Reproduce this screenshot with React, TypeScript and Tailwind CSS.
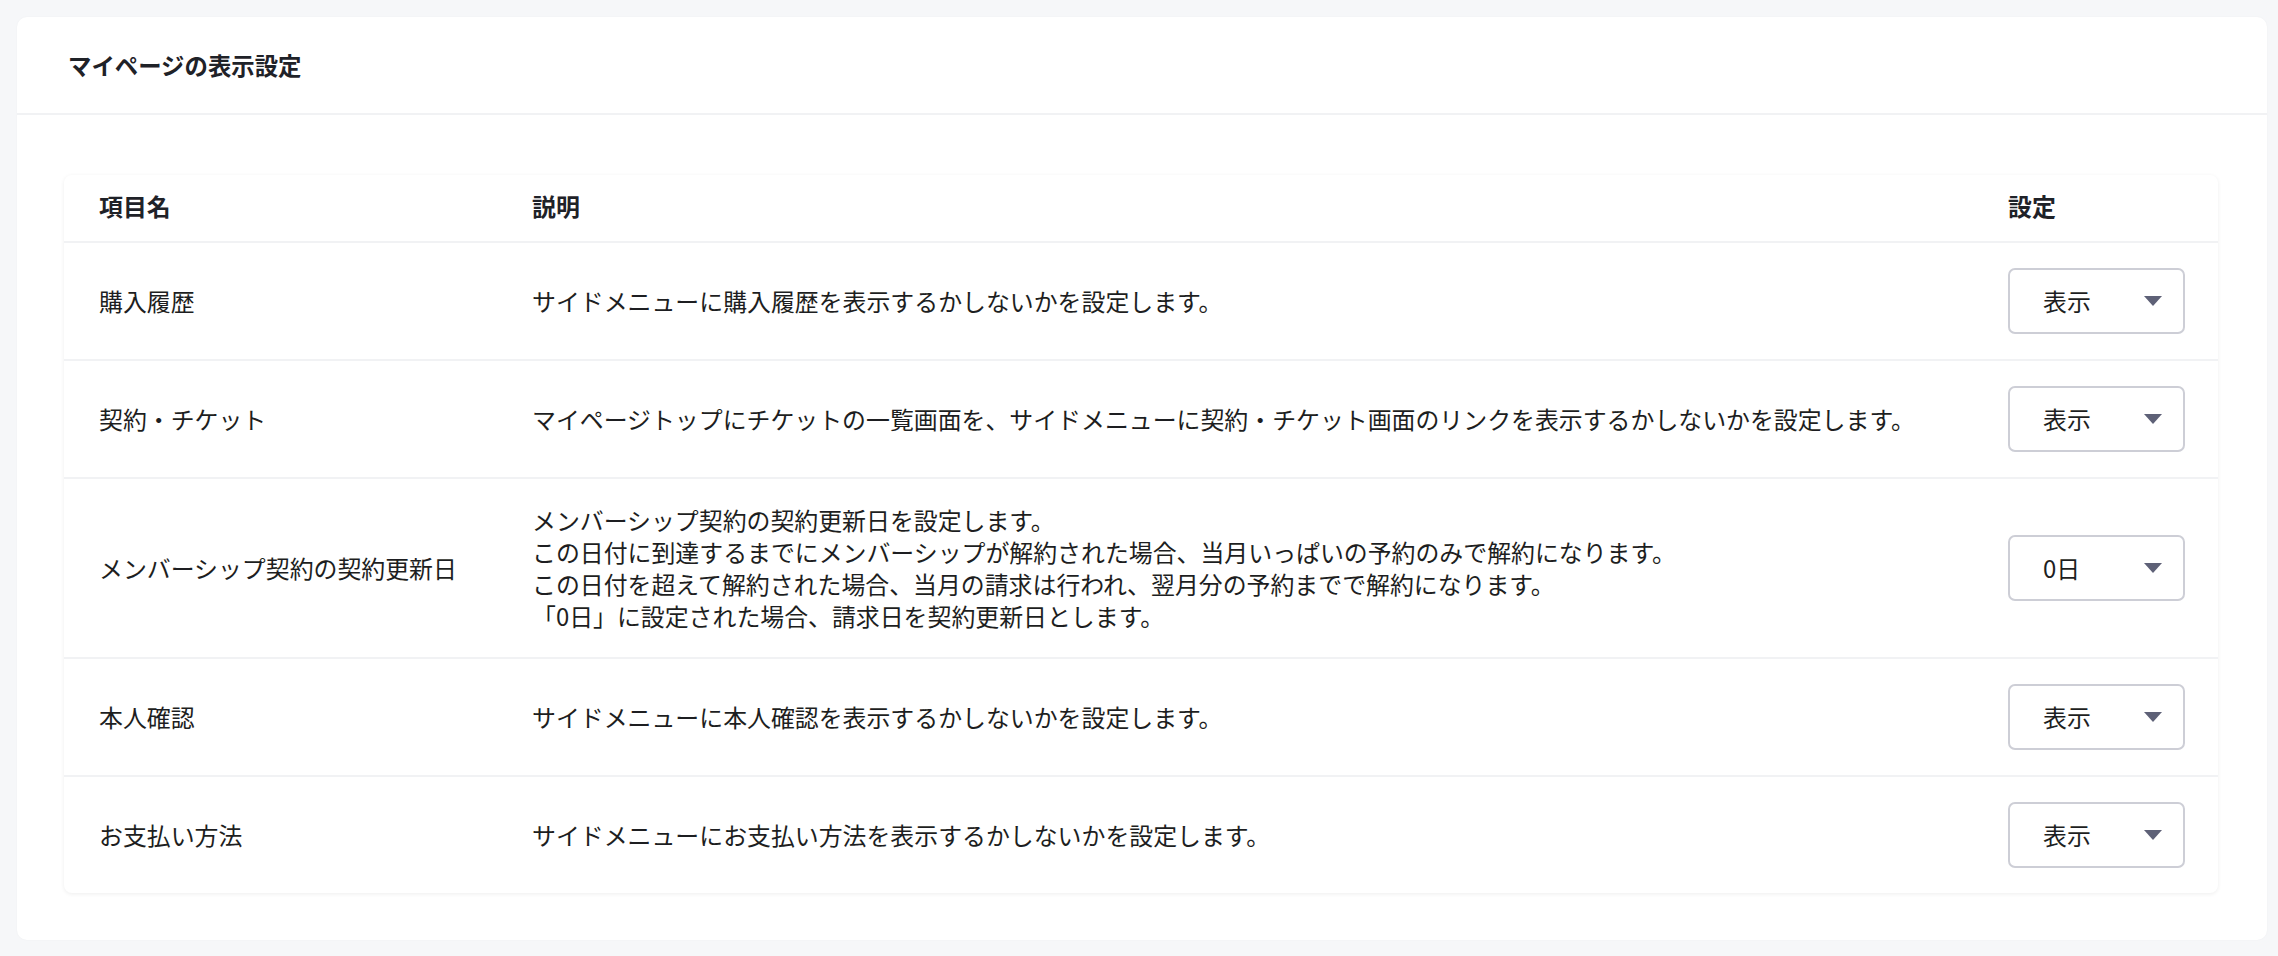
import React from 'react';

interface SettingRow {
  id: string;
  name: string;
  description: string[];
  value: string;
}

const rows: SettingRow[] = [
  {
    id: 'purchase',
    name: '購入履歴',
    description: ['サイドメニューに購入履歴を表示するかしないかを設定します。'],
    value: '表示',
  },
  {
    id: 'ticket',
    name: '契約・チケット',
    description: ['マイページトップにチケットの一覧画面を、サイドメニューに契約・チケット画面のリンクを表示するかしないかを設定します。'],
    value: '表示',
  },
  {
    id: 'renewal',
    name: 'メンバーシップ契約の契約更新日',
    description: [
      'メンバーシップ契約の契約更新日を設定します。',
      'この日付に到達するまでにメンバーシップが解約された場合、当月いっぱいの予約のみで解約になります。',
      'この日付を超えて解約された場合、当月の請求は行われ、翌月分の予約までで解約になります。',
      '「0日」に設定された場合、請求日を契約更新日とします。',
    ],
    value: '0日',
  },
  {
    id: 'identity',
    name: '本人確認',
    description: ['サイドメニューに本人確認を表示するかしないかを設定します。'],
    value: '表示',
  },
  {
    id: 'payment',
    name: 'お支払い方法',
    description: ['サイドメニューにお支払い方法を表示するかしないかを設定します。'],
    value: '表示',
  },
];

const SelectBox: React.FC<{ value: string }> = ({ value }) => (
  <div className="flex items-center justify-between w-[177px] h-[66px] pl-[33px] pr-[21px] bg-white border-2 border-[#cdced6] rounded-[7px] cursor-pointer">
    <span>{value}</span>
    <svg width="18" height="10" viewBox="0 0 18 10">
      <path d="M0 0 H18 L9 10 Z" fill="#5e6177" />
    </svg>
  </div>
);

export default function App() {
  return (
    <div
      className="min-h-[956px] bg-[#f6f7f9] pl-[17px] pr-[11px] pt-[17px] pb-[14px] text-[23.9px] leading-[32px] text-[#1d1e21]"
      style={{ fontFamily: '"Noto Sans CJK JP", "Noto Sans", sans-serif' }}
    >
      <div className="bg-white rounded-[10px] shadow-[0_0_2px_rgba(0,0,0,0.04)]">
        {/* Card header */}
        <div className="h-[98px] flex items-center pl-[51px] border-b-2 border-[#f1f2f4]">
          <h1 className="font-bold text-[23.4px] text-[#1f2228]">マイページの表示設定</h1>
        </div>

        {/* Card body */}
        <div className="pt-[60px] pb-[47px] pl-[47px] pr-[49px]">
          <div className="rounded-[8px] bg-white shadow-[0_1px_4px_rgba(0,0,0,0.07)]">
            <div className="grid grid-cols-[433px_1fr_245px] border-b-2 border-[#f1f2f4] h-[68px] pb-[4px] items-center font-bold text-[#1f2228]">
              <div className="px-[35px]">項目名</div>
              <div className="px-[35px]">説明</div>
              <div className="px-[35px]">設定</div>
            </div>
            {rows.map((row, idx) => (
              <div
                key={row.id}
                className={`grid grid-cols-[433px_1fr_245px] items-center ${idx < rows.length - 1 ? 'border-b-2 border-[#f1f2f4]' : ''}`}
              >
                <div className="px-[35px] py-[25px]">{row.name}</div>
                <div className="px-[35px] py-[25px]">
                  {row.description.map(line => (
                    <div key={line}>{line}</div>
                  ))}
                </div>
                <div className="px-[35px] py-[25px]">
                  <SelectBox value={row.value} />
                </div>
              </div>
            ))}
          </div>
        </div>
      </div>
    </div>
  );
}
